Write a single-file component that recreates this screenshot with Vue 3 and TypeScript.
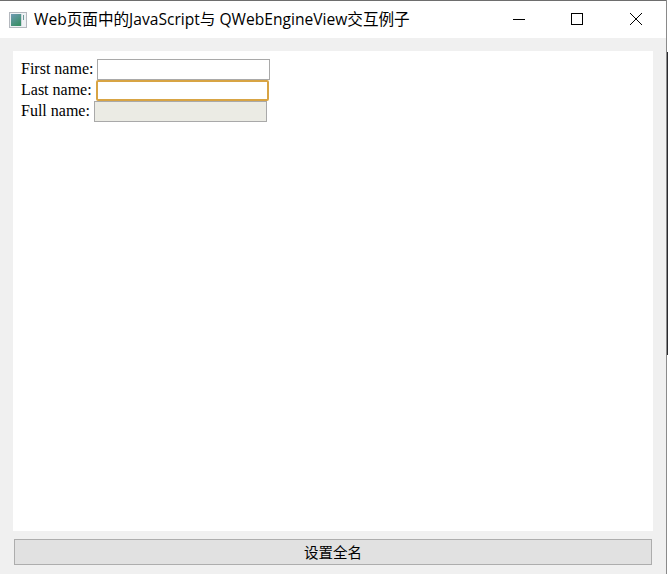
<script setup lang="ts">
const title = 'Web页面中的JavaScript与 QWebEngineView交互例子'
</script>

<template>
  <div class="screen">
    <div class="window">
      <div class="topline"></div>
      <header class="titlebar">
        <svg class="appicon" width="18" height="16" viewBox="0 0 18 16">
          <defs>
            <linearGradient id="pane" x1="0" y1="0" x2="0.6" y2="1">
              <stop offset="0" stop-color="#6f9ab4" />
              <stop offset="1" stop-color="#3a8f68" />
            </linearGradient>
          </defs>
          <rect x="0.5" y="0.5" width="17" height="15" fill="#eef1f4" stroke="#b4b8be" />
          <rect x="2" y="2" width="10" height="12" fill="url(#pane)" />
          <rect x="12" y="2" width="1" height="12" fill="#cfd6dc" />
          <rect x="14" y="3" width="1" height="5" fill="#6f9a98" />
        </svg>
        <span class="title">{{ title }}</span>
        <div class="controls">
          <div class="ctl">
            <svg width="12" height="12" viewBox="0 0 12 12"><path d="M0 6.5H12" stroke="#000" fill="none" /></svg>
          </div>
          <div class="ctl">
            <svg width="12" height="12" viewBox="0 0 12 12"><rect x="0.5" y="0.5" width="11" height="11" stroke="#000" fill="none" /></svg>
          </div>
          <div class="ctl close">
            <svg width="12" height="12" viewBox="0 0 12 12"><path d="M0 0L12 12M12 0L0 12" stroke="#000" stroke-width="1" fill="none" /></svg>
          </div>
        </div>
      </header>
      <main class="client">
        <section class="webview">
          <form class="form">
            First name: <input class="field" type="text" /><br />
            Last name: <input class="field focused" type="text" /><br />
            Full name: <input class="field" type="text" disabled />
          </form>
        </section>
        <button class="action" type="button">设置全名</button>
      </main>
    </div>
    <div class="edge"></div>
  </div>
</template>

<style>
html,
body {
  margin: 0;
  padding: 0;
  background: #fff;
  overflow: hidden;
}
</style>

<style scoped>
.screen {
  display: flex;
  width: 668px;
  height: 574px;
}
.window {
  width: 666px;
  height: 574px;
  display: flex;
  flex-direction: column;
  background: #f0f0f0;
}
.topline {
  height: 1px;
  background: #6e6e6e;
}
.titlebar {
  height: 37px;
  display: flex;
  align-items: center;
  background: #fff;
  padding-left: 9px;
}
.appicon {
  flex: none;
  margin-right: 7px;
}
.title {
  flex: 1;
  font-family: "Open Sans", "Noto Sans CJK SC", sans-serif;
  font-size: 15.6px;
  color: #000;
  white-space: nowrap;
  padding-bottom: 2px;
}
.controls {
  display: flex;
  margin-top: -1px;
}
.ctl {
  width: 58px;
  display: flex;
  justify-content: center;
  align-items: center;
}
.close {
  width: 60px;
}
.client {
  flex: 1;
  display: flex;
  flex-direction: column;
  padding: 13px 13px 9px;
}
.webview {
  height: 480px;
  background: #fff;
  padding: 8px;
  box-sizing: border-box;
}
.form {
  font-family: "Liberation Serif", serif;
  font-size: 16px;
  line-height: 19px;
  color: #000;
}
.field {
  box-sizing: border-box;
  width: 173px;
  height: 21px;
  margin: 0;
  padding: 1px 2px;
  border: 1px solid #a9a9a9;
  background: #fff;
  vertical-align: top;
}
.field:disabled {
  background: #ebebe4;
}
.focused {
  border: 2px solid #d8a444;
  border-radius: 2px;
}
.action {
  height: 26px;
  margin: 8px 1px 0;
  box-sizing: border-box;
  border: 1px solid #adadad;
  background: #e1e1e1;
  font-family: "Noto Sans CJK SC", sans-serif;
  font-size: 14.5px;
  color: #000;
  padding: 0 0 2px;
}
.edge {
  width: 2px;
  height: 574px;
  background: linear-gradient(to bottom, #fff 0, #fff 52px, #2a2a2e 52px, #2a2a2e 355px, #fff 355px, #fff 100%);
  border-left: 1px solid #8a8a8a;
  box-sizing: border-box;
}
</style>
